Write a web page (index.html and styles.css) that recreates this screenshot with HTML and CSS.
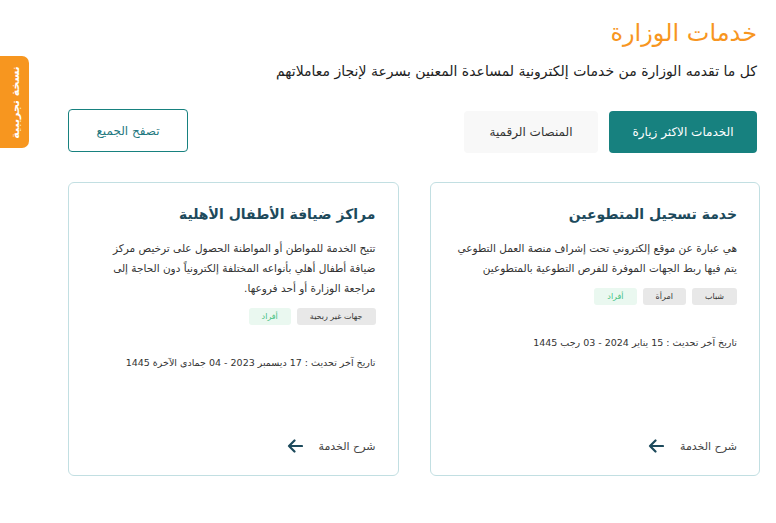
FILE: index.html
```html
<!DOCTYPE html>
<html lang="ar" dir="rtl">
<head>
<meta charset="utf-8">
<link rel="stylesheet" href="styles.css">
</head>
<body>
<div class="beta-tab"><span>نسخة تجريبية</span></div>
<main class="page">
  <h1 class="title">خدمات الوزارة</h1>
  <p class="subtitle">كل ما تقدمه الوزارة من خدمات إلكترونية لمساعدة المعنين بسرعة لإنجاز معاملاتهم</p>
  <div class="toolbar">
    <div class="tabs">
      <button class="tab active">الخدمات الاكثر زيارة</button>
      <button class="tab">المنصات الرقمية</button>
    </div>
    <button class="browse">تصفح الجميع</button>
  </div>
  <div class="cards">
    <article class="card">
      <h2 class="card-title">خدمة تسجيل المتطوعين</h2>
      <p class="card-desc">هي عبارة عن موقع إلكتروني تحت إشراف منصة العمل التطوعي يتم فيها ربط الجهات الموفرة للفرص التطوعية بالمتطوعين</p>
      <div class="tags">
        <span class="tag">شباب</span>
        <span class="tag">امرأة</span>
        <span class="tag green">أفراد</span>
      </div>
      <p class="date">تاريخ آخر تحديث : 15 يناير 2024 - 03 رجب 1445</p>
      <a class="more">شرح الخدمة
        <svg width="16" height="14" viewBox="0 0 16 14"><path d="M15 7H2M7.5 1.5L2 7l5.5 5.5" fill="none" stroke="#1d4a5c" stroke-width="2.2" stroke-linecap="round" stroke-linejoin="round"/></svg>
      </a>
    </article>
    <article class="card">
      <h2 class="card-title">مراكز ضيافة الأطفال الأهلية</h2>
      <p class="card-desc">تتيح الخدمة للمواطن أو المواطنة الحصول على ترخيص مركز ضيافة أطفال أهلي بأنواعه المختلفة إلكترونياً دون الحاجة إلى مراجعة الوزارة أو أحد فروعها.</p>
      <div class="tags">
        <span class="tag">جهات غير ربحية</span>
        <span class="tag green">أفراد</span>
      </div>
      <p class="date">تاريخ آخر تحديث : 17 ديسمبر 2023 - 04 جمادى الآخرة 1445</p>
      <a class="more">شرح الخدمة
        <svg width="16" height="14" viewBox="0 0 16 14"><path d="M15 7H2M7.5 1.5L2 7l5.5 5.5" fill="none" stroke="#1d4a5c" stroke-width="2.2" stroke-linecap="round" stroke-linejoin="round"/></svg>
      </a>
    </article>
  </div>
</main>
</body>
</html>
```
FILE: styles.css
```css
* { box-sizing: border-box; }
html, body { margin: 0; padding: 0; background: #fff; }
body {
  font-family: "DejaVu Sans", "Noto Sans", sans-serif;
  color: #333;
}
.beta-tab {
  position: absolute;
  left: 0;
  top: 56px;
  width: 29px;
  height: 92px;
  background: #f7961f;
  border-radius: 0 7px 7px 0;
}
.beta-tab span {
  position: absolute;
  left: -31px;
  top: 32px;
  width: 92px;
  height: 29px;
  line-height: 29px;
  text-align: center;
  color: #fff;
  font-size: 11px;
  font-weight: bold;
  transform: rotate(-90deg);
  white-space: nowrap;
}
.page {
  padding: 17px 16px 0 68px;
}
.title {
  margin: 0 3px 0 0;
  font-size: 24px;
  font-weight: normal;
  color: #f7961f;
  line-height: 32px;
}
.subtitle {
  margin: 12px 3px 0 0;
  font-size: 14px;
  color: #222;
  line-height: 20px;
}
.toolbar {
  display: flex;
  justify-content: space-between;
  align-items: flex-start;
  margin: 28px 3px 0 0;
}
.tabs { display: flex; gap: 11px; padding-top: 2px; }
button {
  font-family: inherit;
  cursor: pointer;
}
.tab {
  height: 42px;
  border: none;
  border-radius: 4px;
  font-size: 12px;
  background: #f8f8f8;
  color: #333;
  width: 134px;
}
.tab.active {
  background: #17817f;
  color: #fff;
  width: 148px;
}
.browse {
  width: 120px;
  height: 43px;
  border: 1px solid #17817f;
  border-radius: 4px;
  background: #fff;
  color: #1f7880;
  font-size: 12px;
}
.cards {
  display: grid;
  grid-template-columns: 1fr 1fr;
  gap: 31px;
  margin-top: 29px;
}
.card {
  border: 1px solid #c2dfe2;
  border-radius: 6px;
  height: 294px;
  padding: 18px 22px 0 18px;
  display: flex;
  flex-direction: column;
  align-items: flex-start;
}
.card-title {
  margin: 0;
  font-size: 14px;
  font-weight: bold;
  color: #1d4a5c;
  line-height: 26px;
}
.card-desc {
  margin: 11px 0 0;
  font-size: 10.5px;
  line-height: 20px;
  color: #333;
}
.tags {
  display: flex;
  gap: 6px;
  margin-top: 10px;
}
.tag {
  background: #e8e8e8;
  color: #333;
  font-size: 8px;
  padding: 0 13px;
  height: 17px;
  line-height: 17px;
  border-radius: 3px;
}
.tag.green {
  background: #eaf8f0;
  color: #3fbf7f;
}
.date {
  margin: 32px 0 0;
  font-size: 9.5px;
  color: #333;
}
.more {
  margin-top: auto;
  margin-bottom: 22px;
  display: flex;
  align-items: center;
  gap: 16px;
  font-size: 11px;
  color: #444;
}
```
